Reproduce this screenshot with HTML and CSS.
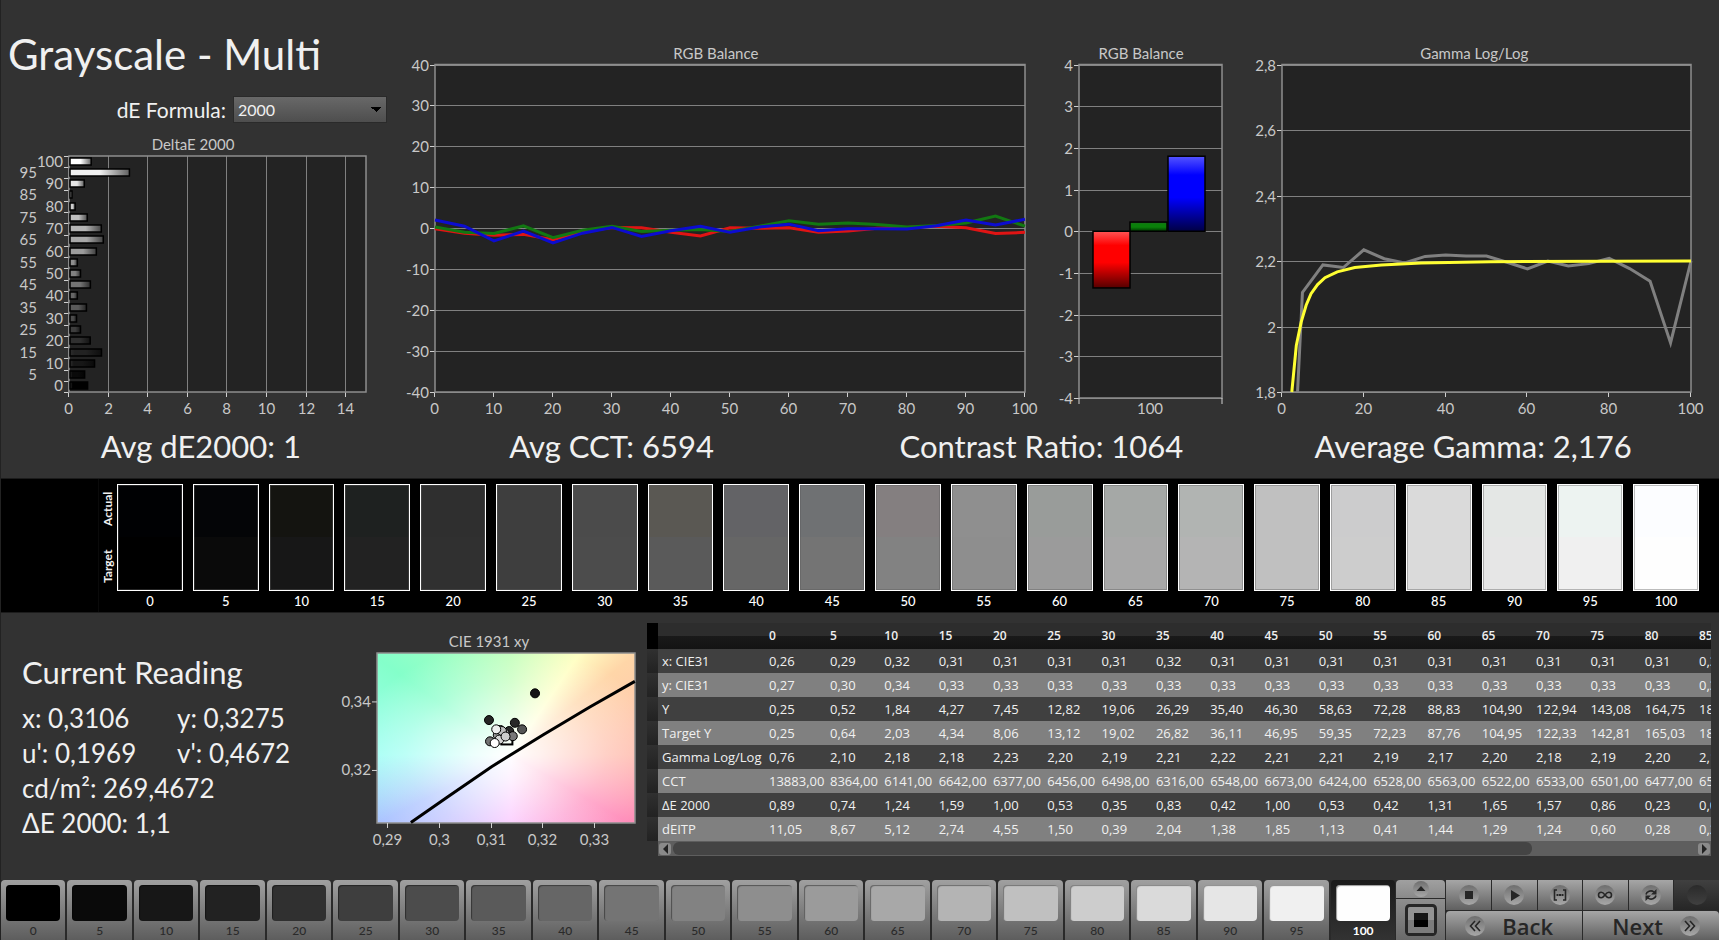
FILE: index.html
```html
<!DOCTYPE html>
<html lang="en">
<head>
    <meta charset="UTF-8">
    <meta name="viewport" content="width=device-width, initial-scale=1.0">
    <title>Grayscale - Multi</title>
    <link rel="stylesheet" href="styles.css">
</head>
<body>

    <section class="top">
        <div class="charts">
            <div class="chart-col">
                <h1>Grayscale - Multi</h1>
                <div class="formula">
                    <label for="formula">dE Formula:</label>
                    <select id="formula">
                        <option>2000</option>
                        <option>1994</option>
                        <option>1976</option>
                    </select>
                </div>
                <svg class="chart chart-de" id="deltaChart"></svg>
            </div>
            <svg class="chart" id="balanceChart"></svg>
            <svg class="chart" id="barChart"></svg>
            <svg class="chart" id="gammaChart"></svg>
        </div>
        <div class="stats">
            <div>Avg dE2000: 1</div>
            <div>Avg CCT: 6594</div>
            <div>Contrast Ratio: 1064</div>
            <div>Average Gamma: 2,176</div>
        </div>
    </section>

    <section class="strip">
        <div class="strip-side"></div>
        <div class="strip-names"><span>Target</span><span>Actual</span></div>
        <div class="swatches" id="swatches"></div>
    </section>

    <section class="bottom">
        <div class="reading">
            <h2>Current Reading</h2>
            <div class="values">
                <span>x: 0,3106</span><span>y: 0,3275</span>
                <span>u': 0,1969</span><span>v': 0,4672</span>
                <span class="wide">cd/m²: 269,4672</span>
                <span class="wide">ΔE 2000: 1,1</span>
            </div>
        </div>
        <svg class="chart chart-cie" id="cieChart"></svg>
        <div class="data">
            <table id="dataTable"></table>
            <div class="scrollbar">
                <button class="scroll-btn" aria-label="Scroll left"><svg width="7" height="10" viewBox="0 0 7 10"><path d="M6 0v10L1 5z"/></svg></button>
                <div class="scroll-track"><div class="scroll-thumb"></div></div>
                <button class="scroll-btn" aria-label="Scroll right"><svg width="7" height="10" viewBox="0 0 7 10"><path d="M1 0v10l5-5z"/></svg></button>
            </div>
        </div>
    </section>

    <footer>
        <div class="patches" id="patches"></div>
        <div class="window-size">
            <button class="up" aria-label="Expand"><svg class="round" width="16" height="16" viewBox="0 0 16 16"><path d="M3.500 10L8 5l4.500 5z"/></svg></button>
            <button class="square" aria-label="Window size">
                <svg width="32" height="32" viewBox="0 0 32 32">
                    <rect x="1.500" y="1.500" width="29" height="29" rx="3" fill="#939393" stroke="#262626" stroke-width="3"/>
                    <rect x="3" y="16" width="26" height="13" fill="#7c7c7c"/>
                    <rect x="9" y="9" width="14" height="7" fill="#161616"/>
                    <rect x="9" y="16" width="14" height="7" fill="#000"/>
                </svg>
            </button>
        </div>
        <div class="controls">
            <div class="transport">
                <button aria-label="Stop"><svg class="round" width="20" height="20" viewBox="0 0 20 20"><rect x="6" y="6" width="8" height="8"/></svg></button>
                <button aria-label="Play"><svg class="round" width="20" height="20" viewBox="0 0 20 20"><path d="M7 5l9 5.500L7 16z"/></svg></button>
                <button aria-label="Range"><svg class="round" width="20" height="20" viewBox="0 0 20 20"><path class="line" d="M7 5H4.500v10H7M13 5h2.500v10H13"/><path d="M6.500 9h2v2h-2zM9 9h2v2H9zM11.500 9h2v2h-2z"/></svg></button>
                <button aria-label="Continuous"><svg class="round" width="20" height="20" viewBox="0 0 20 20"><path class="line" d="M10 10C8.500 8 7.500 7.300 6.200 7.300a2.700 2.700 0 0 0 0 5.400C7.500 12.700 8.500 12 10 10s2.500-2.700 3.800-2.700a2.700 2.700 0 0 1 0 5.400C12.500 12.700 11.500 12 10 10z"/></svg></button>
                <button aria-label="Refresh"><svg class="round" width="20" height="20" viewBox="0 0 20 20"><path class="line" d="M5 9.500C5.500 6.500 10 4.500 13 7M15 10.500c-.5 3-5 5-8 2.500"/><path d="M15.500 4v5.500H10zM4.500 16v-5.500H10z"/></svg></button>
                <button class="off" aria-label="Record" disabled><svg class="round" width="20" height="20" viewBox="0 0 20 20"></svg></button>
            </div>
            <div class="nav">
                <button class="back"><svg class="round" width="20" height="20" viewBox="0 0 20 20"><path class="line" d="M10 5l-4.500 5 4.500 5M15 5l-4.500 5 4.500 5"/></svg><span>Back</span></button>
                <button class="next"><span>Next</span><svg class="round" width="20" height="20" viewBox="0 0 20 20"><path class="line" d="M5 5l4.500 5L5 15M10 5l4.500 5-4.500 5"/></svg></button>
            </div>
        </div>
    </footer>

    <script src="script.js"></script>
</body>
</html>
```
FILE: styles.css
```css
* {
    box-sizing: border-box;
}
body {
    margin: 0;
    min-height: 100vh;
    display: flex;
    flex-direction: column;
    border-left: 1px solid #222;
    background-color: #323232;
    color: #f0f0f0;
    font-family: Lato, "Liberation Sans", sans-serif;
    overflow-x: hidden;
}
h1, h2 {
    margin: 0;
    font-weight: 400;
}
button {
    border: none;
    padding: 0;
    cursor: pointer;
    font-family: inherit;
}

/* top charts */
.charts {
    display: grid;
    grid-template-columns: 390fr 650fr 194fr 484fr;
    align-items: end;
}
.charts > * {
    min-width: 0;
}
h1 {
    padding: 30px 0 0 7px;
    font-size: 42px;
    line-height: 48px;
}
.formula {
    display: flex;
    justify-content: flex-end;
    align-items: center;
    gap: 7px;
    margin: 18px 4px 11px 0;
    font-size: 21px;
    line-height: 26px;
}
.formula select {
    appearance: none;
    width: 154px;
    height: 27px;
    padding: 0 4px;
    border: 1px solid #2a2a2a;
    border-radius: 0;
    color: #f0f0f0;
    font: 16px Lato, sans-serif;
    background: conic-gradient(from 315deg at 50% 100%, #000 90deg, transparent 0) no-repeat right 5px center / 10px 5px, linear-gradient(#686868, #4e4e4e);
}
.chart {
    display: block;
    width: 100%;
    height: 380px;
}
.chart-de {
    height: 290px;
}
.chart text {
    fill: #c8c8c8;
    font-size: 15px;
}
.plot {
    fill: #232323;
}
.frame {
    fill: none;
    stroke: #8e8e8e;
    stroke-width: 1.5;
}
.grid {
    stroke: #808080;
}
.tick {
    stroke: #d0d0d0;
}
.series {
    fill: none;
    stroke-width: 3;
}
.stats {
    display: grid;
    grid-template-columns: 400fr 422fr 438fr 426fr 33fr;
    margin-top: 5px;
    padding-bottom: 15px;
    font-size: 31px;
    line-height: 34px;
    text-align: center;
    white-space: nowrap;
}

/* actual / target strip */
.strip {
    display: flex;
    height: 135px;
    background-color: #000;
    border-top: 1px solid #1c1c1c;
    border-bottom: 1px solid #1c1c1c;
}
.strip-side {
    width: 98px;
    border-right: 1px solid #0a0a0a;
}
.strip-names {
    display: flex;
    justify-content: space-between;
    writing-mode: vertical-rl;
    transform: rotate(180deg);
    width: 18px;
    margin: 7px 0 23px;
    padding: 6px 0;
    font-size: 12px;
    font-weight: 700;
    line-height: 18px;
}
.swatches {
    flex: 1;
    display: grid;
    grid-template-columns: repeat(21, 1fr);
    gap: 10px;
    padding: 5px 20px 0 0;
}
.swatch {
    text-align: center;
    font-size: 13px;
    font-weight: 500;
    color: #fff;
}
.swatch-color {
    height: 107px;
    margin-bottom: 2px;
    border: 1px solid #fff;
    box-shadow: inset 0 0 0 1px rgba(90, 90, 90, 0.4);
}

/* bottom */
.bottom {
    flex: 1;
    display: grid;
    grid-template-columns: 326fr 320fr 1064fr;
    padding-right: 8px;
}
.bottom > * {
    min-width: 0;
}
.reading {
    padding: 41px 0 0 21px;
}
.reading h2 {
    margin-bottom: 11px;
    font-size: 31px;
    line-height: 36px;
}
.values {
    display: grid;
    grid-template-columns: 155px 1fr;
    font-size: 26px;
    line-height: 35px;
}
.values .wide {
    grid-column: span 2;
}
.chart-cie {
    height: 240px;
    margin-top: 12px;
}
.cie-field {
    height: 100%;
    background:
        radial-gradient(ellipse 60% 65% at 50% 60%, #fff 0%, rgba(255, 255, 255, 0.8) 22%, rgba(255, 255, 255, 0.3) 65%, rgba(255, 255, 255, 0) 100%),
        conic-gradient(at 52% 60%, #c4ffbc 0deg, #ffffc4 34deg, #ffd6a8 51deg, #ffbcae 90deg, #ff8cba 120deg, #fabcff 180deg, #acc4ff 243deg, #a0fff4 270deg, #84ffca 306deg, #c4ffbc 360deg);
}
.data {
    padding-top: 10px;
    font-family: "Open Sans", "Noto Sans", sans-serif;
}
.data table {
    width: 100%;
    table-layout: fixed;
    border-collapse: collapse;
    font-size: 13px;
    line-height: 20px;
    color: #f0f0f0;
}
.data th, .data td {
    height: 24px;
    padding: 0 0 0 4px;
    overflow: hidden;
    white-space: nowrap;
    text-align: left;
    font-weight: 400;
}
.data thead th {
    height: 26px;
    font-size: 12px;
    font-weight: 600;
}
.data thead tr {
    background: linear-gradient(#2d2d2d 50%, #1a1a1a 50%, #131313);
}
.data thead th:first-child {
    background-color: #000;
}
.data tbody tr {
    background-color: #404040;
}
.data tbody tr:nth-child(even) {
    background-color: #808080;
}
.data tbody td:first-child {
    background: linear-gradient(#303030, #222);
}
.col-mark {
    width: 11px;
}
.col-name {
    width: 107px;
}
.col-first {
    width: 61px;
}
.col-last {
    width: 16px;
}
.scrollbar {
    display: flex;
    align-items: center;
    height: 15px;
    margin-left: 11px;
    padding: 0 1px;
    background-color: #5e5e5e;
}
.scroll-btn {
    display: flex;
    align-items: center;
    justify-content: center;
    width: 12px;
    height: 12px;
    border-radius: 3px;
    background-color: #8a8a8a;
}
.scroll-btn path {
    fill: #222;
}
.scroll-track {
    flex: 1;
    padding: 0 2px;
}
.scroll-thumb {
    width: 84%;
    height: 13px;
    border-radius: 6px;
    background-color: #444;
}

/* footer */
footer {
    display: flex;
    height: 60px;
    background-color: #2a2a2a;
}
.patches {
    flex: 1396;
    display: grid;
    grid-template-columns: repeat(21, 1fr);
    gap: 2px;
    padding-right: 1px;
}
.patch {
    display: flex;
    flex-direction: column;
    align-items: center;
    padding: 5px 5px 0;
    border-radius: 4px 4px 0 0;
    background: linear-gradient(#a0a0a0, #5c5c5c);
    color: #2a2a2a;
    font-size: 12px;
    font-weight: 500;
    line-height: 20px;
}
.patch-color {
    width: 100%;
    height: 36px;
    border-radius: 4px;
    box-shadow: inset 1px 1px 1px rgba(0, 0, 0, 0.4);
}
.patch.active {
    background: linear-gradient(#1a1a1a, #333);
    color: #fff;
    font-weight: 700;
}
.window-size {
    flex: 49;
    display: flex;
    flex-direction: column;
    gap: 1px;
    padding-right: 1px;
}
.window-size button, .controls button {
    display: flex;
    align-items: center;
    justify-content: center;
    background: linear-gradient(#a6a6a6, #606060);
}
.window-size .up {
    height: 18px;
    border-radius: 4px 4px 0 0;
    background: linear-gradient(#a0a0a0, #8a8a8a);
}
.window-size .square {
    flex: 1;
    background: linear-gradient(#8e8e8e, #6a6a6a);
}
.controls {
    flex: 273;
    display: flex;
    flex-direction: column;
    gap: 1px;
}
.transport {
    display: grid;
    grid-template-columns: repeat(6, 1fr);
    gap: 1px;
    height: 30px;
}
.nav {
    flex: 1;
    display: grid;
    grid-template-columns: 1fr 1fr;
    gap: 1px;
}
.nav button {
    gap: 17px;
    padding: 0 19px;
    color: #262626;
    font-family: "Open Sans", "Noto Sans", sans-serif;
    font-size: 22px;
    font-weight: 600;
    line-height: 28px;
}
.nav .back {
    justify-content: flex-start;
    border-radius: 4px 0 0 0;
}
.nav .next {
    justify-content: flex-end;
    border-radius: 0 4px 0 0;
}
.controls .off {
    background: linear-gradient(#404040, #262626);
}
.round {
    border-radius: 50%;
    background: linear-gradient(#6e6e6e, #a8a8a8);
    fill: #262626;
}
.off .round {
    background: linear-gradient(#2a2a2a, #404040);
}
.round .line {
    fill: none;
    stroke: #262626;
    stroke-width: 1.6;
}
```
FILE: script.js
```js
const levels = [];
for (let i = 0; i <= 100; i += 5) levels.push(i);

const grays = [0, 10, 23, 34, 48, 62, 76, 90, 102, 116, 130, 142, 155, 168, 180, 192, 205, 218, 230, 240, 254];
const actual = ['#000103', '#040507', '#141410', '#1e2120', '#2f2f2f', '#3e3e3e', '#4b4b4b', '#5a5853', '#636366', '#6f7173',
    '#847f80', '#8f8f8f', '#999c9a', '#a5a8a6', '#b1b4b2', '#c0c0c0', '#cccccd', '#dadada', '#e4e7e5', '#edf3f1', '#fcfdff'];
const deltaE = [0.89, 0.74, 1.24, 1.59, 1.02, 0.53, 0.33, 0.83, 0.37, 1.03, 0.53, 0.37, 1.33, 1.68, 1.58, 0.87, 0.26, 0.1, 0.72, 3, 1.07];

const red = [-0.1, -1.2, -1.7, -1.5, -2.8, -0.8, 0.2, 0.1, -1, -1.9, 0.1, 0, 0.1, -1, -0.7, 0, 0.2, 0.5, 0.1, -1.3, -1];
const green = [0.3, -1, -1.3, 0.6, -2.3, -0.5, 0.5, -0.8, -0.5, -0.3, -0.8, 0.5, 1.8, 1, 1.3, 0.9, 0.3, 0.7, 1.3, 3, 0.5];
const blue = [2, 0.5, -3.1, -0.7, -3.6, -1.2, 0.2, -2, -0.6, 0.5, -1, 0.3, 1, -0.6, -0.1, -0.1, -0.2, 0.6, 2, 0.8, 2.2];

const gamma = [[3.8, 1.8], [5, 2.104], [10, 2.188], [15, 2.18], [20, 2.234], [25, 2.207], [30, 2.194], [35, 2.214], [40, 2.218],
    [45, 2.215], [50, 2.215], [55, 2.196], [60, 2.176], [65, 2.2], [70, 2.185], [75, 2.192], [80, 2.208], [85, 2.177],
    [90, 2.138], [95, 1.95], [100, 2.2]];
const gammaTarget = [[2.4, 1.8], [3.5, 1.942], [4.7, 2.014], [5.9, 2.065], [7.1, 2.1], [8.7, 2.128], [10.5, 2.149], [13.5, 2.167],
    [17.8, 2.18], [24.3, 2.188], [34, 2.194], [51, 2.198], [100, 2.2]];

const rows = [
    ['x: CIE31', '0,26', '0,29', '0,32', '0,31', '0,31', '0,31', '0,31', '0,32', '0,31', '0,31', '0,31', '0,31', '0,31', '0,31', '0,31', '0,31', '0,31', '0,31'],
    ['y: CIE31', '0,27', '0,30', '0,34', '0,33', '0,33', '0,33', '0,33', '0,33', '0,33', '0,33', '0,33', '0,33', '0,33', '0,33', '0,33', '0,33', '0,33', '0,33'],
    ['Y', '0,25', '0,52', '1,84', '4,27', '7,45', '12,82', '19,06', '26,29', '35,40', '46,30', '58,63', '72,28', '88,83', '104,90', '122,94', '143,08', '164,75', '188,92'],
    ['Target Y', '0,25', '0,64', '2,03', '4,34', '8,06', '13,12', '19,02', '26,82', '36,11', '46,95', '59,35', '72,23', '87,76', '104,95', '122,33', '142,81', '165,03', '188,41'],
    ['Gamma Log/Log', '0,76', '2,10', '2,18', '2,18', '2,23', '2,20', '2,19', '2,21', '2,22', '2,21', '2,21', '2,19', '2,17', '2,20', '2,18', '2,19', '2,20', '2,18'],
    ['CCT', '13883,00', '8364,00', '6141,00', '6642,00', '6377,00', '6456,00', '6498,00', '6316,00', '6548,00', '6673,00', '6424,00', '6528,00', '6563,00', '6522,00', '6533,00', '6501,00', '6477,00', '6505,00'],
    ['ΔE 2000', '0,89', '0,74', '1,24', '1,59', '1,00', '0,53', '0,35', '0,83', '0,42', '1,00', '0,53', '0,42', '1,31', '1,65', '1,57', '0,86', '0,23', '0,08'],
    ['dEITP', '11,05', '8,67', '5,12', '2,74', '4,55', '1,50', '0,39', '2,04', '1,38', '1,85', '1,13', '0,41', '1,44', '1,29', '1,24', '0,60', '0,28', '0,25']
];

const gray = v => `rgb(${v},${v},${v})`;
const line = (cls, x1, y1, x2, y2) => `<line class="${cls}" x1="${x1}" y1="${y1}" x2="${x2}" y2="${y2}"/>`;
const text = (x, y, anchor, s) => `<text x="${x}" y="${y}" text-anchor="${anchor}">${s}</text>`;
const label = v => String(v).replace('.', ',');

// Plot area of one chart: margins in px, axis ranges, and the scale functions.
function area(id, left, right, top, bottom, xr, yr) {
    const svg = document.getElementById(id);
    const x1 = svg.clientWidth - right;
    return {
        svg, x0: left, x1, y0: top, y1: bottom,
        x: v => left + (v - xr[0]) / (xr[1] - xr[0]) * (x1 - left),
        y: v => bottom - (v - yr[0]) / (yr[1] - yr[0]) * (bottom - top),
        back: `<rect class="plot" x="${left}" y="${top}" width="${x1 - left}" height="${bottom - top}"/>`,
        frame: `<rect class="frame" x="${left}" y="${top}" width="${x1 - left}" height="${bottom - top}"/>`
    };
}

function yAxis(a, values) {
    return values.map(v => {
        const y = Math.round(a.y(v)) + 0.5;
        return line('grid', a.x0, y, a.x1, y) + line('tick', a.x0 - 5, y, a.x0, y) + text(a.x0 - 6, y + 5, 'end', label(v));
    }).join('');
}

function xAxis(a, values, grid) {
    return values.map(v => {
        const x = Math.round(a.x(v)) - 0.5;
        return (grid ? line('grid', x, a.y0, x, a.y1) : '') + line('tick', x, a.y1, x, a.y1 + 5) + text(x, a.y1 + 22, 'middle', label(v));
    }).join('');
}

function series(a, points, color) {
    return `<polyline class="series" stroke="${color}" points="${points.map(p => a.x(p[0]) + ',' + a.y(p[1])).join(' ')}"/>`;
}

function drawDelta() {
    const a = area('deltaChart', 68, 25, 22, 258, [0, 15], [0, 21]);
    let html = '<defs>';
    grays.forEach((g, i) => {
        html += `<linearGradient id="g${i}"><stop offset="0" stop-color="${gray(Math.max(g, 45))}"/><stop offset="0.15" stop-color="${gray(g)}"/><stop offset="0.5" stop-color="${gray(g)}"/><stop offset="1" stop-color="${gray(Math.round(g * 0.4))}"/></linearGradient>`;
    });
    html += '</defs>' + text(192, 16, 'middle', 'DeltaE 2000') + a.back;
    html += xAxis(a, [0, 2, 4, 6, 8, 10, 12, 14], true);
    for (let i = 0; i <= 21; i++) {
        const y = Math.round(a.y(i)) + 0.5;
        html += line('tick', a.x0 - 5, y, a.x0, y);
    }
    html += a.frame;
    levels.forEach((l, i) => {
        const y = Math.round(a.y(i + 0.5));
        html += text(i % 2 ? 36 : 62, y + 5, 'end', l);
        html += `<rect x="${a.x0 + 1}" y="${y - 4}" width="${a.x(deltaE[i]) - a.x0}" height="7" fill="url(#g${i})" stroke="#000" stroke-width="1.5"/>`;
    });
    a.svg.innerHTML = html;
}

function drawBalance() {
    const a = area('balanceChart', 44, 16, 20.5, 348, [0, 100], [-40, 40]);
    a.svg.innerHTML = text(a.x(47.6), 15, 'middle', 'RGB Balance') + a.back
        + yAxis(a, [-40, -30, -20, -10, 0, 10, 20, 30, 40])
        + xAxis(a, [0, 10, 20, 30, 40, 50, 60, 70, 80, 90, 100]) + a.frame
        + series(a, levels.map((l, i) => [l, red[i]]), '#e01414')
        + series(a, levels.map((l, i) => [l, green[i]]), '#127812')
        + series(a, levels.map((l, i) => [l, blue[i]]), '#0c0cd0');
}

function drawBars() {
    const a = area('barChart', 38, 13, 20.5, 354, [0, 143], [-4, 4]);
    const bars = [[14, -1.36, 'r', '#f55', '#f00', '#500'], [51, 0.22, 'g', '#262', '#0a800a', '#030'], [89, 1.8, 'b', '#55f', '#00f', '#004']];
    let html = text(a.x(62), 15, 'middle', 'RGB Balance') + a.back + yAxis(a, [-4, -3, -2, -1, 0, 1, 2, 3, 4]) + a.frame
        + line('tick', a.x0, a.y1, a.x0, a.y1 + 6) + line('tick', a.x1, a.y1, a.x1, a.y1 + 6)
        + text(a.x(71), 370, 'middle', '100');
    bars.forEach(([x, v, id, top, mid, end]) => {
        const y = a.y(Math.max(v, 0));
        html += `<linearGradient id="${id}" x2="0" y2="1"><stop offset="0" stop-color="${top}"/><stop offset="0.25" stop-color="${mid}"/><stop offset="0.55" stop-color="${mid}"/><stop offset="1" stop-color="${end}"/></linearGradient>`;
        html += `<rect x="${a.x(x)}" y="${y}" width="${a.x(37) - a.x0}" height="${Math.abs(a.y(v) - a.y(0))}" fill="url(#${id})" stroke="#000" stroke-width="1.5"/>`;
    });
    a.svg.innerHTML = html;
}

function drawGamma() {
    const a = area('gammaChart', 47, 28, 20.5, 348, [0, 100], [1.8, 2.8]);
    a.svg.innerHTML = text(a.x(47), 15, 'middle', 'Gamma Log/Log') + a.back
        + yAxis(a, [1.8, 2, 2.2, 2.4, 2.6, 2.8]) + xAxis(a, [0, 20, 40, 60, 80, 100]) + a.frame
        + series(a, gamma, '#808080') + series(a, gammaTarget, '#ffff32');
}

function drawCie() {
    const a = area('cieChart', 50, 12, 28, 198, [0.28785, 0.33773], [0.30467, 0.35427]);
    const dots = [[0.3184, 0.3425, 20], [0.3095, 0.3347, 36], [0.3145, 0.3339, 40], [0.3134, 0.3315, 40], [0.3159, 0.332, 85],
        [0.3117, 0.3318, 110], [0.3097, 0.3285, 115], [0.3141, 0.33, 120], [0.3112, 0.3303, 150], [0.3125, 0.3309, 165],
        [0.312, 0.3315, 190], [0.3115, 0.329, 215], [0.3127, 0.3299, 205], [0.3109, 0.332, 238], [0.3106, 0.328, 255]];
    let html = text(a.x(0.3095), 22, 'middle', 'CIE 1931 xy');
    html += `<foreignObject x="${a.x0}" y="${a.y0}" width="${a.x1 - a.x0}" height="${a.y1 - a.y0}"><div class="cie-field"></div></foreignObject>` + a.frame;
    [0.34, 0.32].forEach(v => {
        html += line('tick', a.x0 - 5, a.y(v), a.x0, a.y(v)) + text(a.x0 - 6, a.y(v) + 5, 'end', label(v));
    });
    html += xAxis(a, [0.29, 0.3, 0.31, 0.32, 0.33]);
    html += series(a, [[0.2944, 0.3048], [0.3019, 0.3127], [0.31, 0.3211], [0.32, 0.3304], [0.329, 0.3385], [0.3377, 0.346]], '#000');
    html += `<rect x="${a.x(0.3119)}" y="${a.y(0.3308)}" width="11" height="11" fill="none" stroke="#000" stroke-width="2"/>`;
    dots.forEach(([x, y, g]) => {
        html += `<circle cx="${a.x(x)}" cy="${a.y(y)}" r="4.5" fill="${gray(g)}" stroke="#000"/>`;
    });
    a.svg.innerHTML = html;
}

function drawAll() {
    drawDelta();
    drawBalance();
    drawBars();
    drawGamma();
    drawCie();
}

document.getElementById('swatches').innerHTML = levels.map((l, i) =>
    `<div class="swatch"><div class="swatch-color" style="background: linear-gradient(${actual[i]} 50%, ${gray(grays[i])} 50%)"></div>${l}</div>`).join('');

document.getElementById('patches').innerHTML = levels.map((l, i) =>
    `<button class="patch${l === 100 ? ' active' : ''}"><span class="patch-color" style="background-color: ${gray(grays[i])}"></span>${l}</button>`).join('');

const count = rows[0].length - 1;
let head = '<thead><tr><th class="col-mark"></th><th class="col-name"></th>';
for (let i = 0; i < count; i++) {
    const cls = i === 0 ? 'col-first' : i === count - 1 ? 'col-last' : '';
    head += `<th class="${cls}">${levels[i]}</th>`;
}
head += '</tr></thead>';
document.getElementById('dataTable').innerHTML = head + '<tbody>' + rows.map(r =>
    `<tr><td></td><th>${r[0]}</th>${r.slice(1).map(v => `<td>${v}</td>`).join('')}</tr>`).join('') + '</tbody>';

drawAll();
window.addEventListener('resize', drawAll);
```
